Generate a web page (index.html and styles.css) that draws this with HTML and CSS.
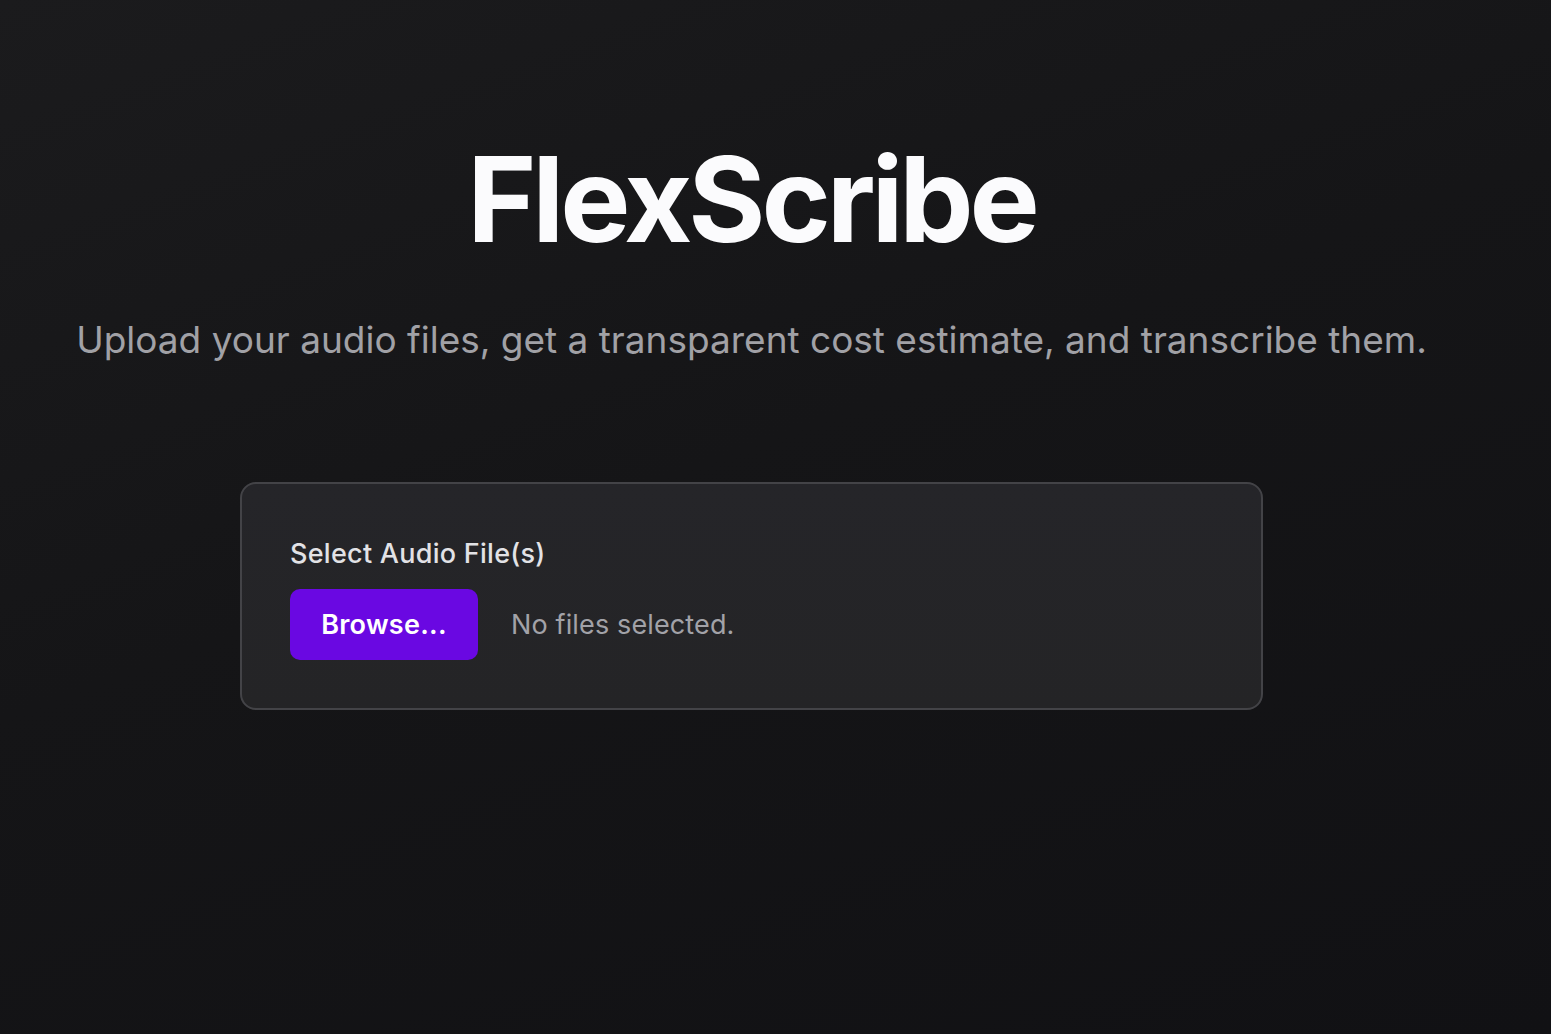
FILE: index.html
```html
<!DOCTYPE html>
<html lang="en">
<head>
<meta charset="utf-8">
<title>FlexScribe</title>
<link rel="stylesheet" href="styles.css">
</head>
<body>
<main class="page">
  <header class="hero">
    <h1 class="title">FlexScribe</h1>
    <p class="subtitle">Upload your audio files, get a transparent cost estimate, and transcribe them.</p>
  </header>
  <section class="card">
    <label class="field-label">Select Audio File(s)</label>
    <div class="file-row">
      <button class="browse" type="button">Browse...</button>
      <span class="file-status">No files selected.</span>
    </div>
  </section>
</main>
</body>
</html>
```

FILE: styles.css
```css
html, body {
  margin: 0;
  padding: 0;
  height: 100%;
}
body {
  background: linear-gradient(160deg, #1b1b1d 0%, #151517 45%, #111114 100%);
  font-family: Inter, "Noto Sans", "Liberation Sans", sans-serif;
  color: #f4f4f6;
  overflow: hidden;
}
.page {
  width: 1503px;
  display: flex;
  flex-direction: column;
  align-items: center;
  padding-top: 124px;
}
.hero {
  display: flex;
  flex-direction: column;
  align-items: center;
}
.title {
  margin: 0;
  font-size: 118px;
  font-weight: 700;
  letter-spacing: -0.035em;
  line-height: 150px;
  color: #fbfbfd;
}
.subtitle {
  margin: 44px 0 0;
  font-size: 37px;
  font-weight: 400;
  line-height: 44px;
  color: #a1a1a6;
}
.card {
  margin-top: 120px;
  width: 1023px;
  box-sizing: border-box;
  padding: 54px 48px 48px;
  background: linear-gradient(180deg, #252529 0%, #242426 100%);
  border: 2px solid #434347;
  border-radius: 16px;
  display: flex;
  flex-direction: column;
  gap: 19px;
}
.field-label {
  font-size: 27px;
  line-height: 32px;
  font-weight: 500;
  letter-spacing: 0.01em;
  color: #e2e2e6;
}
.file-row {
  display: flex;
  align-items: center;
  gap: 33px;
}
.browse {
  width: 188px;
  height: 71px;
  border: none;
  border-radius: 10px;
  background: #6a08e2;
  color: #ffffff;
  font-family: inherit;
  font-size: 27px;
  font-weight: 600;
  letter-spacing: 0.01em;
  padding: 0;
}
.file-status {
  font-size: 27px;
  letter-spacing: 0.005em;
  color: #a2a2a8;
}
```
